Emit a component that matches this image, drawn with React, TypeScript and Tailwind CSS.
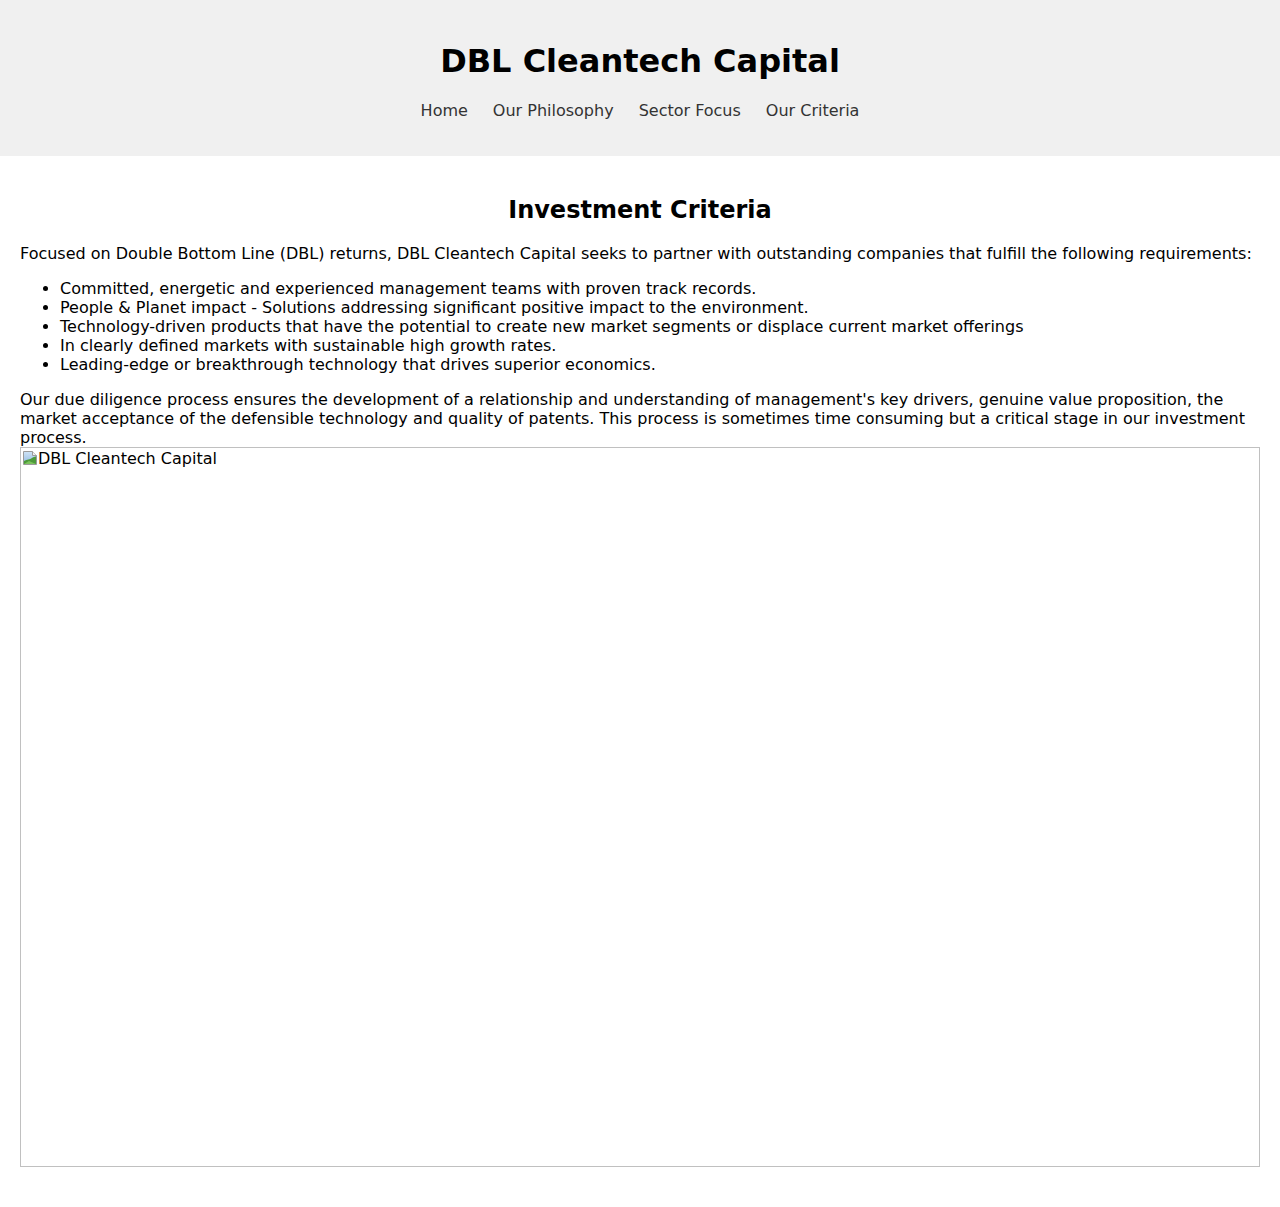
const criteria = [
  'Committed, energetic and experienced management teams with proven track records.',
  'People & Planet impact - Solutions addressing significant positive impact to the environment.',
  'Technology-driven products that have the potential to create new market segments or displace current market offerings',
  'In clearly defined markets with sustainable high growth rates.',
  'Leading-edge or breakthrough technology that drives superior economics.',
];

const navLinks = ['Home', 'Our Philosophy', 'Sector Focus', 'Our Criteria'];

function BrokenImageIcon() {
  return (
    <svg width="16" height="16" viewBox="0 0 16 16" className="ml-[1px] shrink-0">
      <defs>
        <linearGradient id="sky" x1="0" y1="0" x2="0" y2="1">
          <stop offset="0" stopColor="#cfe3f5" />
          <stop offset="1" stopColor="#8fb8e0" />
        </linearGradient>
      </defs>
      <path d="M1.5 1.5h9l4 4v9h-13z" fill="url(#sky)" stroke="#9a9a9a" />
      <path d="M10.5 1.5v4h4" fill="#eee" stroke="#9a9a9a" />
      <path d="M2 14V11c3-2 6-1 8-3 1.5-1 3-1.5 4-1.5V14z" fill="#4c9a3a" />
      <path d="M2 14l5-3 7 3z" fill="#7cc35c" />
    </svg>
  );
}

export default function App() {
  return (
    <div className="min-h-[1207px] bg-white text-black" style={{ fontFamily: '"DejaVu Sans", sans-serif' }}>
      {/* Header */}
      <header className="bg-[#f0f0f0] pt-[22px] pb-[20px] text-center">
        <h1 className="mt-[21px] mb-[21px] text-[32px] leading-[37px] font-bold">DBL Cleantech Capital</h1>
        <nav className="mb-[16px]">
          <ul className="flex justify-center gap-[25px] text-[16px] leading-[19px] text-[#333]">
            {navLinks.map((link) => (
              <li key={link}>
                <a href="#">{link}</a>
              </li>
            ))}
          </ul>
        </nav>
      </header>

      {/* Content */}
      <main className="px-[20px] pt-[20px] pb-[40px] text-[16px] leading-[19px]">
        <h2 className="mt-[20px] mb-[20px] text-center text-[24px] leading-[28px] font-bold">Investment Criteria</h2>
        <p>
          Focused on Double Bottom Line (DBL) returns, DBL Cleantech Capital seeks to partner with outstanding companies that fulfill the following requirements:
        </p>
        <ul className="my-[16px] list-disc pl-[40px]">
          {criteria.map((item) => (
            <li key={item}>{item}</li>
          ))}
        </ul>
        <p>
          Our due diligence process ensures the development of a relationship and understanding of management's key drivers, genuine value proposition, the market acceptance of the defensible technology and quality of patents. This process is sometimes time consuming but a critical stage in our investment process.
        </p>
        <div className="h-[720px] w-full border border-[#c0c0c0]">
          <div className="flex items-start pt-[2px]">
            <BrokenImageIcon />
            <span className="leading-[17px]">DBL Cleantech Capital</span>
          </div>
        </div>
      </main>
    </div>
  );
}
